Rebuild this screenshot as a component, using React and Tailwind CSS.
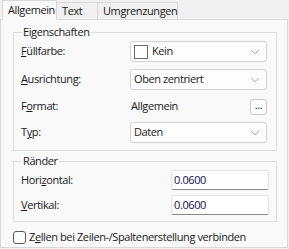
import { ChevronDown } from "lucide-react";

function Tab({ active, children, width }) {
    if (active) {
        return (
            <div
                className={`relative z-10 h-[20px] ${width} border-l border-t border-r border-[#d9d9d9] bg-[#f9f9f9] pl-[5px] leading-[18px]`}
            >
                {children}
            </div>
        );
    }
    return (
        <div
            className={`mt-[2px] h-[17px] ${width} border-t border-r border-[#d9d9d9] bg-[#f0f0f0] pl-[5px] leading-[16px]`}
        >
            {children}
        </div>
    );
}

function Select({ children }) {
    return (
        <div className="flex h-[21px] w-[137px] items-center rounded-[3px] border border-[#d2d2d2] bg-[#fdfdfd] pl-[3px] pr-[4px]">
            <div className="flex flex-1 items-center">{children}</div>
            <ChevronDown size={14} strokeWidth={1} className="text-[#5f5f5f]" />
        </div>
    );
}

function Field({ value }) {
    return (
        <div className="h-[20px] w-[98px] rounded-[2px] border border-[#e3e3e3] border-b-[#8a8a8a] bg-white pl-[2px] leading-[18px] text-[#10104a]">
            {value}
        </div>
    );
}

export default function App() {
    return (
        <div className="h-[249px] w-[289px] overflow-hidden bg-[#f0f0f0] font-['Open_Sans',sans-serif] text-[11px] tracking-[-0.4px] text-[#1a1a1a]">
            {/* tab strip */}
            <div className="flex h-[20px] items-start pl-[2px]">
                <Tab active width="w-[55px]">Allgemein</Tab>
                <Tab width="w-[41px]">Text</Tab>
                <Tab width="w-[80px]">Umgrenzungen</Tab>
            </div>

            <div className="-mt-px h-[229px] w-[288px] border border-[#d9d9d9] bg-[#f9f9f9] px-[12px] pt-[4px]">
                <fieldset className="border border-[#dcdcdc] pb-[7px] pl-[7px] pr-[9px]">
                    <legend className="ml-[1px] px-[1px] leading-[16px]">Eigenschaften</legend>

                    <div className="mt-[1px] flex h-[21px] items-center">
                        <div className="w-[109px]">
                            <span className="underline">F</span>üllfarbe:
                        </div>
                        <Select>
                            <span className="mr-[4px] h-[14px] w-[14px] border border-[#6b6b6b] bg-white"></span>
                            Kein
                        </Select>
                    </div>

                    <div className="mt-[7px] flex h-[21px] items-center">
                        <div className="w-[109px]">
                            <span className="underline">A</span>usrichtung:
                        </div>
                        <Select>Oben zentriert</Select>
                    </div>

                    <div className="mt-[6px] flex h-[21px] items-center">
                        <div className="w-[110px]">
                            F<span className="underline">o</span>rmat:
                        </div>
                        <div className="flex-1">Allgemein</div>
                        <div className="flex h-[16px] w-[17px] items-center justify-center rounded-[3px] border border-[#c9c9c9] bg-[#fdfdfd] pb-[3px] text-[11px]">
                            ...
                        </div>
                    </div>

                    <div className="mt-[5px] flex h-[21px] items-center">
                        <div className="w-[109px]">
                            T<span className="underline">y</span>p:
                        </div>
                        <Select>Daten</Select>
                    </div>
                </fieldset>

                <fieldset className="mt-[2px] border border-[#dcdcdc] pb-[6px] pl-[7px] pr-[7px]">
                    <legend className="ml-[1px] px-[1px] leading-[16px]">Ränder</legend>

                    <div className="mt-[1px] flex h-[20px] items-center">
                        <div className="w-[150px]">
                            Hori<span className="underline">z</span>ontal:
                        </div>
                        <Field value="0.0600" />
                    </div>

                    <div className="mt-[5px] flex h-[20px] items-center">
                        <div className="w-[150px]">
                            <span className="underline">V</span>ertikal:
                        </div>
                        <Field value="0.0600" />
                    </div>
                </fieldset>

                <label className="mt-[7px] flex items-center">
                    <span className="h-[13px] w-[13px] rounded-[3px] border border-[#5a5a5a] bg-[#fbfbfb]"></span>
                    <span className="ml-[3px]">
                        Z<span className="underline">e</span>llen bei Zeilen-/Spaltenerstellung verbinden
                    </span>
                </label>
            </div>
        </div>
    );
}
